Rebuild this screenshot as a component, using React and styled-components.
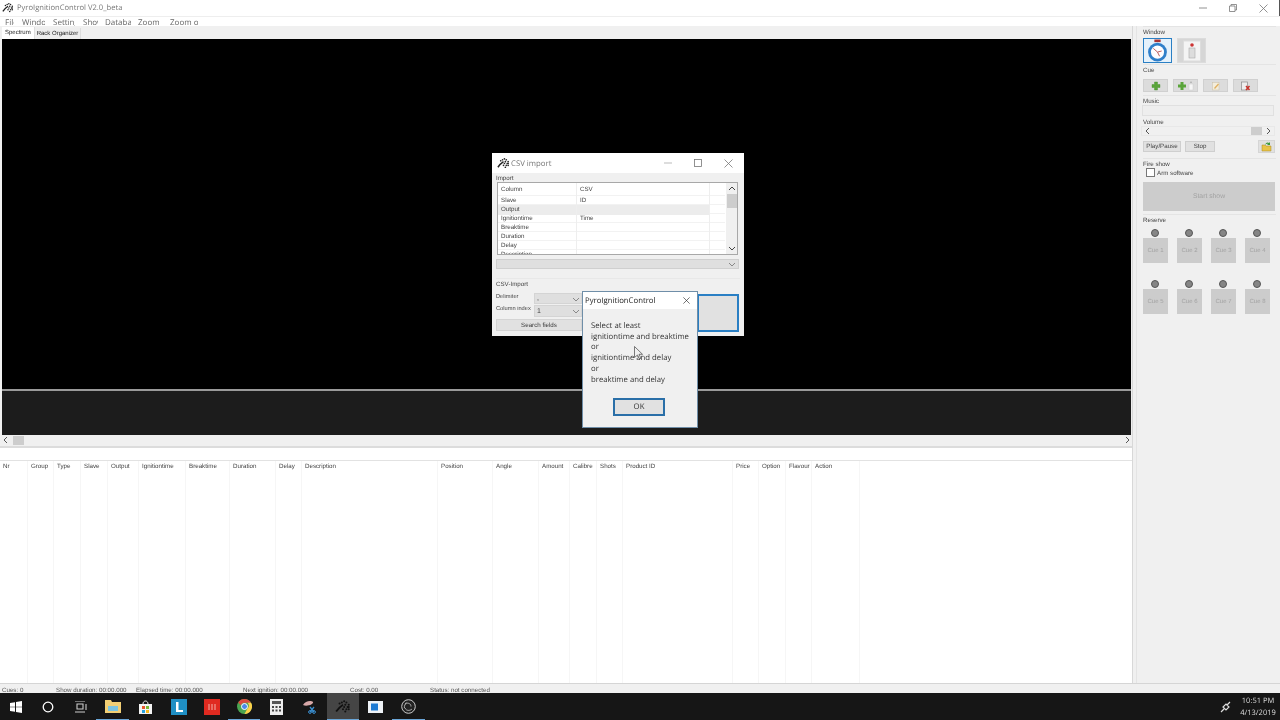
import React from "react";
import styled, { createGlobalStyle } from "styled-components";

const Global = createGlobalStyle`
  html, body { margin: 0; padding: 0; background: #fff; overflow: hidden; }
  * { box-sizing: border-box; }
`;
const UI = `"Open Sans", "Liberation Sans", sans-serif`;
const Root = styled.div`
  position: relative; width: 1280px; height: 720px; overflow: hidden;
  display: flex; flex-direction: column; background: #f0f0f0;
  font-family: "Liberation Sans", sans-serif; font-size: 6.5px; color: #3a3a3a;
  text-rendering: geometricPrecision;
  filter: blur(0.3px);
`;
const TitleBar = styled.div`
  height: 16px; flex: none; background: #fff; display: flex; align-items: center; padding-left: 2px;
  font-family: ${UI}; font-size: 7.6px; color: #777; gap: 3px;
`;
const WinControls = styled.div`
  margin-left: auto; display: flex; align-items: center; color: #777;
`;
const WinBtn = styled.div`
  width: 30px; display: flex; justify-content: center; align-items: center;
`;
const TitleEdge = styled.div`width: 1px; height: 16px; background: #555; margin-left: 1px;`;
const MenuBar = styled.div`
  height: 10px; flex: none; background: #fff; display: flex; overflow: hidden; position: relative;
  font-family: ${UI}; font-size: 8px; color: #666; border-top: 1px solid #eee;
`;
const MenuItem = styled.div`
  width: ${p => p.$w}px; flex: none; overflow: hidden; white-space: nowrap; line-height: 11px; margin-left: ${p => p.$gap}px;
`;
const Body = styled.div`flex: 1; min-height: 0; display: flex;`;
const LeftCol = styled.div`
  width: 1133px; flex: none; display: flex; flex-direction: column; background: #f0f0f0;
  border-right: 1px solid #d8d8d8;
`;
const Tabs = styled.div`height: 13px; flex: none; display: flex; padding-left: 2px; align-items: flex-end;`;
const Tab = styled.div`
  height: ${p => p.$on ? 12 : 11}px; padding: 0 ${p => p.$on ? 3 : 2}px; background: ${p => p.$on ? "#fff" : "#eee"};
  font-size: 6px; line-height: 12px; color: #222; border-right: 1px solid #ddd;
`;
const Canvas = styled.div`
  height: 350px; flex: none; background: #000; margin-left: 2px; margin-right: 1px; 
`;
const Divider = styled.div`height: 2px; flex: none; background: #9a9a9a; margin-left: 2px; margin-right: 1px;`;
const Band = styled.div`height: 44px; flex: none; background: #1c1c1c; margin-left: 2px; margin-right: 1px;`;
const HScroll = styled.div`
  height: 10px; flex: none; background: #f0f0f0; display: flex; align-items: center; margin-left: 2px; margin-right: 1px;
  color: #555; font-size: 8px;
`;
const Thumb = styled.div`width: 11px; height: 9px; background: #cdcdcd; margin-left: 3px;`;
const Arrow = styled.svg`width: 8px; height: 8px; flex: none;`;
const Spacer = styled.div`flex: 1;`;
const Sash = styled.div`
  height: 14px; flex: none; background: #fff; border-top: 2px solid #dcdcdc;
  margin-top: 1px;
`;
const TableArea = styled.div`
  flex: 1; min-height: 0; background: #fff; border-top: 1px solid #e2e2e2;
  display: flex;
`;
const Col = styled.div`
  width: ${p => p.$w}px; flex: none; height: 100%; border-right: 1px solid #f6f6f6;
  padding: 2px 0 0 3px; font-size: 6.2px; color: #444; white-space: nowrap; overflow: hidden;
`;
const Right = styled.div`
  flex: 1; background: #f0f0f0; padding: 0 4px 0 6px; display: flex; flex-direction: column;
  border-left: 1px solid #e4e4e4; margin-left: 3px;
`;
const Group = styled.div`
  height: ${p => p.$h}px; flex: none; border-top: 1px solid #e4e4e4; position: relative; padding-top: 1px;
`;
const Label = styled.div`font-size: 6.2px; line-height: 9px; height: 8px; color: #444; margin-top: ${p => p.$t || 0}px;`;
const Row = styled.div`
  display: flex; gap: ${p => p.$gap || 0}px; margin-top: ${p => p.$t || 0}px; margin-left: ${p => p.$l || 0}px; align-items: center;
`;
const IconTile = styled.div`
  width: 29px; height: 25px; background: ${p => p.$on ? "#e5f1fb" : "#d6d6d6"};
  border: ${p => p.$on ? "1px solid #2a7fc4" : "1px solid #dcdcdc"};
  display: flex; align-items: center; justify-content: center;
`;
const SmallTile = styled.div`
  width: 25px; height: 13px; background: #dcdcdc; border: 1px solid #d0d0d0;
  display: flex; align-items: center; justify-content: center;
`;
const MusicBox = styled.div`height: 11px; width: 132px; margin-left: -1px; background: #eee; border: 1px solid #e0e0e0;`;
const VolBar = styled.div`
  height: 10px; width: 134px; margin-left: -2px; background: #f0f0f0; display: flex; align-items: center; padding: 0 2px;
  border: 1px solid #e8e8e8; justify-content: space-between;
`;
const VolThumb = styled.div`width: 11px; height: 8px; background: #cdcdcd; margin-left: auto; margin-right: 2px;`;
const Btn = styled.div`
  width: ${p => p.$w}px; height: 11px; background: #e1e1e1; border: 1px solid #cfcfcf; font-size: 6.2px;
  line-height: 10px; text-align: center; color: #444;
`;
const FolderBtn = styled.div`
  width: 17px; height: 13px; margin-left: auto; margin-right: 1px; background: #e1e1e1; border: 1px solid #d5d5d5;
  display: flex; align-items: center; justify-content: center;
`;
const Check = styled.div`width: 9px; height: 9px; border: 1px solid #777; background: #fff; flex: none;`;
const StartBtn = styled.div`
  width: 132px; height: 29px; margin-top: 5px; background: #cccccc; color: #a2a2a2;
  font-size: 6.8px; line-height: 30px; text-align: center;
`;
const CueGrid = styled.div`
  display: grid; grid-template-columns: repeat(4, 25px); column-gap: 9px; margin-top: ${p => p.$t}px;
`;
const CueCell = styled.div`display: flex; flex-direction: column; align-items: center;`;
const Led = styled.div`
  width: 8px; height: 8px; border-radius: 50%; background: #858585; border: 1px solid #555; margin-right: 2px;
`;
const CueBtn = styled.div`
  width: 25px; height: 25px; margin-top: 1px; background: #cccccc; color: #a2a2a2; font-size: 6px;
  line-height: 26px; text-align: center;
`;
const Status = styled.div`
  height: 10px; flex: none; background: #f0f0f0; border-top: 1px solid #d5d5d5; display: flex;
  font-size: 6.2px; color: #555; line-height: 9px; padding: 2px 0 0 2px; white-space: nowrap;
`;
const StatusItem = styled.div`width: ${p => p.$w}px; flex: none;`;
const Taskbar = styled.div`
  height: 27px; flex: none; background: #161616; display: flex; align-items: stretch; color: #eee;
`;
const TaskIcon = styled.div`
  width: ${p => p.$w || 33}px; flex: none; display: flex; align-items: center; justify-content: center;
  background: ${p => p.$active ? "#454545" : "transparent"};
  box-shadow: ${p => p.$run ? "inset 0 -1px 0 #6aa6d8" : "none"};
`;
const Tray = styled.div`margin-left: auto; display: flex; align-items: center; gap: 5px;`;
const Clock = styled.div`
  font-family: ${UI}; font-size: 7.5px; line-height: 12px; text-align: center; color: #ddd; width: 44px;
`;
const CsvWindow = styled.div`
  position: absolute; left: 492px; top: 153px; width: 252px; height: 183px; background: #f0f0f0;
  display: flex; flex-direction: column;
`;
const CsvTitle = styled.div`
  height: 20px; flex: none; background: #fff; display: flex; align-items: center; padding-left: 5px; gap: 1px;
  font-family: ${UI}; font-size: 7.8px; color: #777;
`;
const CsvName = styled.span`margin-top: 1px;`;
const CsvControls = styled.div`margin-left: auto; display: flex; align-items: center;`;
const CsvCtl = styled.div`width: 30.5px; display: flex; justify-content: center; align-items: center;`;
const CsvInner = styled.div`flex: 1; padding: 1px 4px 0; position: relative;`;
const ListBox = styled.div`
  height: 73px; margin: 0 1px; width: 241px; background: #fff; border: 1px solid #a8a8a8; overflow: hidden; display: flex;
`;
const ListRows = styled.div`flex: 1; overflow: hidden;`;
const ListRow = styled.div`
  height: ${p => p.$h || 9}px; display: grid; grid-template-columns: 79px 133px 1fr; line-height: ${p => (p.$h || 9) + 1}px;
  font-size: 6.2px; color: #444; border-bottom: 1px solid #f2f2f2;
`;
const Cell = styled.div`
  padding-left: ${p => p.$p || 3}px; background: ${p => p.$hl ? "#ececec" : "transparent"};
  border-right: 1px solid ${p => p.$end ? "#fff" : "#eee"}; white-space: nowrap;
`;
const ListScroll = styled.div`
  width: 11px; flex: none; background: #f0f0f0; display: flex; flex-direction: column; align-items: center; justify-content: space-between; padding: 2px 0;
`;
const ListThumb = styled.div`width: 10px; height: 14px; background: #cdcdcd; margin-top: 1px; margin-bottom: auto;`;
const WideCombo = styled.div`
  height: 10px; width: 243px; margin-top: 4px; background: #dfdfdf; border: 1px solid #cfcfcf; display: flex; align-items: center; justify-content: flex-end; padding-right: 2px;
`;
const SubGroup = styled.div`margin-top: 9px; border-top: 1px solid #e8e8e8; padding-top: 1px;`;
const FormRow = styled.div`display: flex; align-items: flex-start; margin-top: ${p => p.$t || 0}px;`;
const FormLabel = styled.div`width: 38px; flex: none; white-space: nowrap; color: #444; line-height: 8px; height: 7px; font-size: 5.7px;`;
const Combo = styled.div`
  width: 48px; height: ${p => p.$h}px; background: #dfdfdf; border: 1px solid #d4d4d4; display: flex; align-items: center; justify-content: space-between;
  padding: 0 1px 0 2px; color: #444; font-size: 7px;
`;
const SearchBtn = styled.div`
  width: 86px; height: 12px; margin-top: 2px; background: #e1e1e1; border: 1px solid #d4d4d4; font-size: 6.2px; line-height: 11px; text-align: center;
`;
const BigBtn = styled.div`
  position: absolute; left: 205px; top: 121px; width: 42px; height: 38px; background: #e1e1e1; border: 2px solid #2a7fc4;
`;
const MsgBox = styled.div`
  position: absolute; left: 583px; top: 292px; width: 114px; height: 135px; background: #f0f0f0;
  box-shadow: 0 0 0 1px #6f8ea8; display: flex; flex-direction: column; font-family: ${UI};
`;
const MsgTitle = styled.div`
  height: 17px; flex: none; background: #fff; font-size: 7.75px; color: #222; display: flex; align-items: center;
  justify-content: space-between; padding: 0 7px 0 2px;
`;
const MsgText = styled.div`
  margin-top: 12px; padding-left: 8px; font-size: 7.75px; line-height: 10.7px; color: #333; white-space: pre;
`;
const OkBtn = styled.div`
  width: 52px; height: 18px; margin: 13px 0 0 30px; background: #e1e1e1; border: 2px solid #2a6fa8; font-size: 7.75px;
  color: #333; line-height: 14px; text-align: center;
`;
const Cursor = styled.svg`position: absolute; left: 634px; top: 346px; width: 9px; height: 14px;`;

const Chev = ({ d = "down", c = "#555" }) => {
  const p = { down: "M1 3l3 3 3-3", up: "M1 5l3-3 3 3", left: "M5 1L2 4l3 3", right: "M3 1l3 3-3 3" }[d];
  return <Arrow viewBox="0 0 8 8"><path d={p} fill="none" stroke={c} strokeWidth="1" /></Arrow>;
};
const Pyro = ({ s = 14, c = "#222" }) => (
  <svg width={s} height={s} viewBox="0 0 14 14">
    <path d="M1 11c2-3 3-4 6-6" stroke={c} strokeWidth="1.6" fill="none" />
    {[[8,2],[10,3],[12,5],[9,5],[11,7],[8,7],[10,9],[12,9],[7,9],[9,11],[6,3],[4,4],[12,7]].map(([x,y],i)=>(
      <circle key={i} cx={x} cy={y} r="0.9" fill={c} />
    ))}
  </svg>
);
const Stopwatch = () => (
  <svg width="21" height="23" viewBox="0 0 20 22">
    <rect x="7" y="0.5" width="6" height="2.5" fill="#a33" />
    <circle cx="10" cy="12.5" r="9" fill="#2f7fca" />
    <circle cx="10" cy="12.5" r="6.3" fill="#fdfdff" />
    <path d="M10 12.5L6 9M10 12.5l4-1M10 12.5l2 4" stroke="#b55" strokeWidth="0.9" />
  </svg>
);
const SwitchIcon = () => (
  <svg width="20" height="22" viewBox="0 0 20 22">
    <rect x="1.5" y="1" width="17" height="20" fill="#f4f4f4" stroke="#ddd" />
    <circle cx="10" cy="5" r="1.8" fill="#c33" />
    <rect x="7" y="8" width="6" height="10" fill="#ddd" stroke="#aaa" strokeWidth="0.6" />
  </svg>
);
const Plus = () => <svg width="10" height="10" viewBox="0 0 10 10"><path d="M3.5 1h3v2.500H9v3H6.500V9h-3V6.500H1v-3h2.500z" fill="#5aa53a" stroke="#3f8a2a" strokeWidth="0.4" /></svg>;
const PlusMore = () => (
  <svg width="18" height="10" viewBox="0 0 18 10">
    <path d="M3.500 1h3v2.500H9v3H6.500V9h-3V6.500H1v-3h2.500z" fill="#5aa53a" />
    <rect x="12" y="3" width="4" height="6" fill="#f6f6f6" stroke="#ccc" strokeWidth="0.5" /><circle cx="14" cy="1.200" r="0.7" fill="#999" />
  </svg>
);
const EditIcon = () => (
  <svg width="10" height="10" viewBox="0 0 10 10">
    <rect x="1.500" y="1.500" width="6.500" height="7.500" fill="#f3eddc" stroke="#c9c0a5" strokeWidth="0.5" />
    <path d="M3 7l4-4.500 1 1L4 8z" fill="#e0b060" />
  </svg>
);
const DeleteIcon = () => (
  <svg width="11" height="10" viewBox="0 0 11 10">
    <rect x="1.500" y="1" width="6" height="8" fill="#eee" stroke="#8a8a8a" strokeWidth="0.7" />
    <path d="M6 5l3.500 4M9.500 5L6 9" stroke="#c8322a" strokeWidth="1.500" />
  </svg>
);
const FolderIcon = () => (
  <svg width="11" height="11" viewBox="0 0 11 11">
    <path d="M1 4h3l1 1h5v5H1z" fill="#e9c348" stroke="#a98a22" strokeWidth="0.5" />
    <path d="M4 4c1-3 3-3 4-2l1-1v3H6l1-1c-1-.5-2 0-3 1z" fill="#3a9a3a" />
  </svg>
);
const Close = ({ s = 9, c = "#777" }) => <svg width={s} height={s} viewBox="0 0 9 9"><path d="M.5.5l8 8M8.500.5l-8 8" stroke={c} strokeWidth="0.8" /></svg>;
const Square = ({ s = 8, c = "#777" }) => <svg width={s} height={s} viewBox="0 0 8 8"><rect x=".5" y=".5" width="7" height="7" fill="none" stroke={c} strokeWidth="0.8" /></svg>;
const Restore = () => <svg width="8" height="8" viewBox="0 0 8 8"><path d="M.5 2h5.500v5.500H.5zM2 2V.5h5.500V6H6" fill="none" stroke="#777" strokeWidth="0.8" /></svg>;
const Minus = ({ c = "#777" }) => <svg width="8" height="8" viewBox="0 0 8 8"><path d="M0 4h8" stroke={c} strokeWidth="0.8" /></svg>;

const columns = [
  ["Nr", 28], ["Group", 26], ["Type", 27], ["Slave", 27], ["Output", 31], ["Ignitiontime", 47], ["Breaktime", 44],
  ["Duration", 46], ["Delay", 26], ["Description", 136], ["Position", 55], ["Angle", 46], ["Amount", 31], ["Calibre", 27],
  ["Shots", 26], ["Product ID", 110], ["Price", 26], ["Option", 27], ["Flavour", 26], ["Action", 48],
];
const listRows = [
  ["Slave", "ID"], ["Output", "", true], ["Ignitiontime", "Time"], ["Breaktime", ""], ["Duration", ""], ["Delay", ""], ["Description", ""],
];
const menus = [["File", 9, 5], ["Window", 23, 8], ["Settings", 22, 8], ["Show", 15, 8], ["Database", 26, 7], ["Zoom", 21, 7], ["Zoom o", 28, 11]];
const cues = [1, 2, 3, 4, 5, 6, 7, 8];

export default function App() {
  return (
    <Root>
      <Global />
      <TitleBar>
        <Pyro s={12} />
        <span>PyroIgnitionControl V2.0_beta</span>
        <WinControls>
          <WinBtn><Minus /></WinBtn>
          <WinBtn><Restore /></WinBtn>
          <WinBtn><Close /></WinBtn>
          <TitleEdge />
        </WinControls>
      </TitleBar>
      <MenuBar>{menus.map(([t, w, g]) => <MenuItem key={t} $w={w} $gap={g}>{t}</MenuItem>)}</MenuBar>
      <Body>
        <LeftCol>
          <Tabs>
            <Tab $on>Spectrum</Tab>
            <Tab>Rack Organizer</Tab>
          </Tabs>
          <Canvas />
          <Divider />
          <Band />
          <HScroll>
            <Chev d="left" /><Thumb /><Spacer /><Chev d="right" />
          </HScroll>
          <Sash />
          <TableArea>{columns.map(([t, w]) => <Col key={t} $w={w}>{t}</Col>)}</TableArea>
        </LeftCol>
        <Right>
          <Group $h={38}>
            <Label>Window</Label>
            <Row $gap={5} $t={2}>
              <IconTile $on><Stopwatch /></IconTile>
              <IconTile><SwitchIcon /></IconTile>
            </Row>
          </Group>
          <Group $h={31}>
            <Label>Cue</Label>
            <Row $gap={5} $t={5}>
              <SmallTile><Plus /></SmallTile>
              <SmallTile><PlusMore /></SmallTile>
              <SmallTile><EditIcon /></SmallTile>
              <SmallTile><DeleteIcon /></SmallTile>
            </Row>
          </Group>
          <Group $h={63}>
            <Label>Music</Label>
            <MusicBox />
            <Label $t={2}>Volume</Label>
            <VolBar><Chev d="left" /><VolThumb /><Chev d="right" /></VolBar>
            <Row $gap={4} $t={4}>
              <Btn $w={38}>Play/Pause</Btn>
              <Btn $w={30}>Stop</Btn>
              <FolderBtn><FolderIcon /></FolderBtn>
            </Row>
          </Group>
          <Group $h={56}>
            <Label>Fire show</Label>
            <Row $gap={2} $l={3}><Check /><Label>Arm software</Label></Row>
            <StartBtn>Start show</StartBtn>
          </Group>
          <Group $h={120}>
            <Label>Reserve</Label>
            {[0, 4].map((o, i) => (
              <CueGrid key={o} $t={i ? 17 : 5}>
                {cues.slice(o, o + 4).map(n => (
                  <CueCell key={n}><Led /><CueBtn>Cue {n}</CueBtn></CueCell>
                ))}
              </CueGrid>
            ))}
          </Group>
        </Right>
      </Body>
      <Status>
        <StatusItem $w={54}>Cues: 0</StatusItem>
        <StatusItem $w={80}>Show duration: 00:00.000</StatusItem>
        <StatusItem $w={107}>Elapsed time: 00:00.000</StatusItem>
        <StatusItem $w={107}>Next ignition: 00:00.000</StatusItem>
        <StatusItem $w={80}>Cost: 0.00</StatusItem>
        <StatusItem $w={70}>Status: not connected</StatusItem>
      </Status>
      <Taskbar>
        <TaskIcon $w={31}>
          <svg width="12" height="12" viewBox="0 0 12 12"><path d="M0 2l5-.7V5.700H0zM6 1.100L12 0v5.700H6zM0 6.300h5v4.400L0 10zM6 6.300h6V12l-6-1z" fill="#fff" /></svg>
        </TaskIcon>
        <TaskIcon $w={33}>
          <svg width="12" height="12" viewBox="0 0 12 12"><circle cx="6" cy="6" r="4.800" fill="none" stroke="#fff" strokeWidth="1.300" /></svg>
        </TaskIcon>
        <TaskIcon $w={32}>
          <svg width="13" height="12" viewBox="0 0 13 12"><path d="M1 0h10M1 11h10M3 3h6v5H3zM12 3v6" fill="none" stroke="#ccc" strokeWidth="1.100" /></svg>
        </TaskIcon>
        <TaskIcon $w={33} $run>
          <svg width="16" height="13" viewBox="0 0 16 13"><path d="M0 0h6l1 2h9v11H0z" fill="#f2cf74" /><rect x="3" y="6" width="10" height="5" fill="#7cc3e0" /></svg>
        </TaskIcon>
        <TaskIcon $w={33}>
          <svg width="15" height="14" viewBox="0 0 15 14"><path d="M1 4h13v10H1z" fill="#f3f3f3" /><path d="M5 4c0-4 5-4 5 0" fill="none" stroke="#f3f3f3" /><rect x="4" y="6" width="3" height="3" fill="#e8552c" /><rect x="8" y="6" width="3" height="3" fill="#7ab833" /><rect x="4" y="10" width="3" height="3" fill="#27a0dc" /><rect x="8" y="10" width="3" height="3" fill="#f5b81f" /></svg>
        </TaskIcon>
        <TaskIcon $w={33}>
          <svg width="16" height="16" viewBox="0 0 16 16"><rect width="16" height="16" fill="#1f8fc4" /><path d="M5 3h2.500v8H12v2H5z" fill="#fff" /></svg>
        </TaskIcon>
        <TaskIcon $w={33}>
          <svg width="16" height="16" viewBox="0 0 16 16"><rect width="16" height="16" fill="#e02a20" /><path d="M5 5v6M8 5v6M11 5v6" stroke="#f3b0a8" /></svg>
        </TaskIcon>
        <TaskIcon $w={32} $run>
          <svg width="15" height="15" viewBox="0 0 15 15"><circle cx="7.500" cy="7.500" r="7.500" fill="#4aa551" /><path d="M7.500 0a7.500 7.500 0 0 1 6.500 3.750H7.500A3.750 3.750 0 0 0 3.900 6.500L1.200 3.400A7.500 7.500 0 0 1 7.500 0z" fill="#dd4b3e" /><path d="M14 3.750A7.500 7.500 0 0 1 7.500 15l3-5.500a3.750 3.750 0 0 0 0-5.750z" fill="#fcd14a" /><circle cx="7.500" cy="7.500" r="3" fill="#4a8ae8" stroke="#fff" /></svg>
        </TaskIcon>
        <TaskIcon $w={33}>
          <svg width="13" height="16" viewBox="0 0 13 16"><rect width="13" height="16" fill="#eee" /><rect x="2" y="2" width="9" height="3" fill="#555" /><path d="M2 7h2v2H2zM5.500 7h2v2h-2zM9 7h2v2H9zM2 10.500h2v2H2zM5.500 10.500h2v2h-2zM9 10.500h2v2H9z" fill="#444" /></svg>
        </TaskIcon>
        <TaskIcon $w={34}>
          <svg width="16" height="15" viewBox="0 0 16 15"><path d="M1 6c2-4 8-5 10-3 1 2-6 5-10 3z" fill="#d8a8a8" /><path d="M8 8l4 5M12 8l-4 5" stroke="#3a8fd0" strokeWidth="1.300" /><circle cx="8" cy="13" r="1.400" fill="none" stroke="#3a8fd0" /><circle cx="12" cy="13" r="1.400" fill="none" stroke="#3a8fd0" /></svg>
        </TaskIcon>
        <TaskIcon $w={32} $active $run><Pyro s={16} c="#111" /></TaskIcon>
        <TaskIcon $w={33}>
          <svg width="15" height="12" viewBox="0 0 15 12"><rect width="15" height="12" fill="#eef2f6" /><rect x="3" y="2.500" width="7" height="7" fill="#1d7ad2" /></svg>
        </TaskIcon>
        <TaskIcon $w={33} $run>
          <svg width="15" height="15" viewBox="0 0 15 15"><circle cx="7.500" cy="7.500" r="6.800" fill="#222" stroke="#ccc" /><path d="M4 4.500c3-1 6 0 6 3M11 10c-2 2-6 2-7-1M3.500 9c-.5-2 .5-4 2-5" fill="none" stroke="#ccc" strokeWidth="0.800" /></svg>
        </TaskIcon>
        <Tray>
          <svg width="11" height="12" viewBox="0 0 11 12"><path d="M1 11l3-3M3 6l3 3 3-3-3-3zM7 4l3-3" fill="none" stroke="#ddd" strokeWidth="1.200" /></svg>
          <Clock>10:51 PM<br />4/13/2019</Clock>
        </Tray>
      </Taskbar>

      <CsvWindow>
        <CsvTitle>
          <Pyro s={13} />
          <CsvName>CSV import</CsvName>
          <CsvControls>
            <CsvCtl><Minus c="#aaa" /></CsvCtl>
            <CsvCtl><Square /></CsvCtl>
            <CsvCtl><Close /></CsvCtl>
          </CsvControls>
        </CsvTitle>
        <CsvInner>
          <Label>Import</Label>
          <ListBox>
            <ListRows>
              <ListRow $h={13}><Cell>Column</Cell><Cell>CSV</Cell><Cell $end /></ListRow>
              {listRows.map(([a, b, hl]) => (
                <ListRow key={a}><Cell $hl={hl}>{a}</Cell><Cell $hl={hl}>{b}</Cell><Cell $end /></ListRow>
              ))}
            </ListRows>
            <ListScroll><Chev d="up" c="#444" /><ListThumb /><Chev d="down" c="#444" /></ListScroll>
          </ListBox>
          <WideCombo><Chev c="#888" /></WideCombo>
          <SubGroup>
            <Label>CSV-Import</Label>
            <FormRow $t={5}><FormLabel>Delimiter</FormLabel><Combo $h={11}><span>,</span><Chev c="#888" /></Combo></FormRow>
            <FormRow $t={1}><FormLabel>Column index</FormLabel><Combo $h={12}><span>1</span><Chev c="#888" /></Combo></FormRow>
            <SearchBtn>Search fields</SearchBtn>
          </SubGroup>
          <BigBtn />
        </CsvInner>
      </CsvWindow>

      <MsgBox>
        <MsgTitle>
          <span>PyroIgnitionControl</span>
          <Close s={7} c="#222" />
        </MsgTitle>
        <MsgText>{"Select at least\nignitiontime and breaktime\nor\nignitiontime and delay\nor\nbreaktime and delay"}</MsgText>
        <OkBtn>OK</OkBtn>
      </MsgBox>
      <Cursor viewBox="0 0 9 14"><path d="M.5.500v11l3-2.500 2 4 1.500-.7-2-4h3.500z" fill="#f0f0f0" stroke="#444" strokeWidth="0.7" /></Cursor>
    </Root>
  );
}
